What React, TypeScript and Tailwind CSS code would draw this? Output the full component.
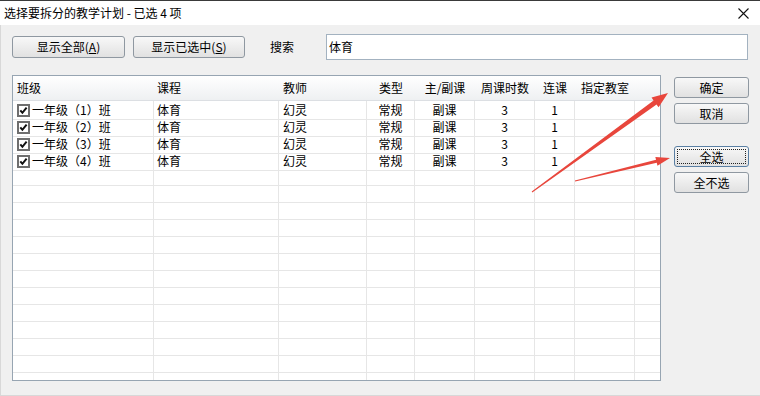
const cols = "grid grid-cols-[141px_125px_88px_48px_60px_60px_40px_60px_25px]";

const rows = [1, 2, 3, 4].map((n) => ({
  cls: `一年级（${n}）班`,
  course: "体育",
  teacher: "幻灵",
  type: "常规",
  kind: "副课",
  hours: "3",
  lian: "1",
}));

const Btn = ({
  children,
  className = "",
  focused = false,
}: {
  children: React.ReactNode;
  className?: string;
  focused?: boolean;
}) => (
  <button
    className={
      "relative flex items-center justify-center rounded-[3px] border bg-linear-to-b from-[#f8f8f8] to-[#e1e1e1] text-[12px] leading-none text-black " +
      (focused ? "border-[#5a7fa3] " : "border-[#8f98a1] ") +
      className
    }
  >
    {focused && (
      <span className="absolute inset-[2px] border border-dotted border-[#222]" />
    )}
    {children}
  </button>
);

const CheckBox = () => (
  <svg width="13" height="13" viewBox="0 0 13 13" className="shrink-0">
    <rect x="1" y="1" width="11" height="11" fill="#fff" stroke="#6e6e6e" strokeWidth="2" />
    <polyline
      points="3.3,6.3 5.4,8.8 9.6,3.6"
      fill="none"
      stroke="#111"
      strokeWidth="2"
    />
  </svg>
);

type Pt = [number, number];

// tapered arrow polygon from tail to tip
function arrowPoints(t: Pt, p: Pt, tw: number, sw: number, hl: number, hw: number) {
  const dx = p[0] - t[0];
  const dy = p[1] - t[1];
  const len = Math.hypot(dx, dy);
  const ux = dx / len;
  const uy = dy / len;
  const nx = -uy;
  const ny = ux;
  const b: Pt = [p[0] - ux * hl, p[1] - uy * hl];
  const pts: Pt[] = [
    [t[0] + (nx * tw) / 2, t[1] + (ny * tw) / 2],
    [b[0] + (nx * sw) / 2, b[1] + (ny * sw) / 2],
    [b[0] + (nx * hw) / 2, b[1] + (ny * hw) / 2],
    p,
    [b[0] - (nx * hw) / 2, b[1] - (ny * hw) / 2],
    [b[0] - (nx * sw) / 2, b[1] - (ny * sw) / 2],
    [t[0] - (nx * tw) / 2, t[1] - (ny * tw) / 2],
  ];
  return pts.map((q) => q.join(",")).join(" ");
}

export default function App() {
  const empty = Array.from({ length: 13 });

  return (
    <div className="relative w-[760px] h-[396px] overflow-hidden flex flex-col bg-white font-['Noto_Sans_CJK_SC','Noto_Sans',sans-serif] text-black">
      {/* title bar */}
      <div className="h-[25px] shrink-0 flex items-center justify-between border-t border-[#3a3a3a] bg-white pl-[4px] pr-[11px]">
        <span className="text-[12px] leading-none">选择要拆分的教学计划 - 已选 4 项</span>
        <svg width="11" height="11" viewBox="0 0 11 11">
          <path d="M0.5 0.5 L10.5 10.5 M10.5 0.5 L0.5 10.5" stroke="#111" strokeWidth="1.1" />
        </svg>
      </div>

      {/* body */}
      <div className="flex-1 bg-[#f0f0f0] border-l border-b border-[#d8d8d8]">
        <div className="flex items-center h-[26px] mt-[9px] pl-[11px]">
          <Btn className="w-[113px] h-[22px]">
            显示全部(<span className="underline">A</span>)
          </Btn>
          <Btn className="w-[112px] h-[22px] ml-[8px]">
            显示已选中(<span className="underline">S</span>)
          </Btn>
          <span className="ml-[25px] w-[24px] text-[12px]">搜索</span>
          <div className="ml-[32px] w-[422px] h-[26px] border border-[#a3b2c0] bg-white flex items-center pl-[2px] text-[12px]">
            体育
          </div>
        </div>

        <div className="flex mt-[15px] pl-[11px]">
          {/* table */}
          <div className="w-[649px] h-[306px] border border-[#97a5b2] bg-white overflow-hidden text-[12px]">
            <div className={cols + " h-[25px] items-center bg-linear-to-b from-white to-[#eef0f2] border-b border-[#dcdfe3]"}>
              <span className="pl-[4px]">班级</span>
              <span className="pl-[3px]">课程</span>
              <span className="pl-[4px]">教师</span>
              <span className="text-center">类型</span>
              <span className="text-center">主/副课</span>
              <span className="text-center">周课时数</span>
              <span className="text-center">连课</span>
              <span className="text-center">指定教室</span>
              <span />
            </div>
            {rows.map((r, i) => (
              <div key={i} className={cols + " h-[17px]"}>
                <div className="flex items-center gap-[2px] pl-[4px] border-r border-b border-[#e6e6e6]">
                  <CheckBox />
                  <span>{r.cls}</span>
                </div>
                <div className="flex items-center pl-[3px] border-r border-b border-[#e6e6e6]">{r.course}</div>
                <div className="flex items-center pl-[4px] border-r border-b border-[#e6e6e6]">{r.teacher}</div>
                <div className="flex items-center justify-center border-r border-b border-[#e6e6e6]">{r.type}</div>
                <div className="flex items-center justify-center border-r border-b border-[#e6e6e6]">{r.kind}</div>
                <div className="flex items-center justify-center border-r border-b border-[#e6e6e6]">{r.hours}</div>
                <div className="flex items-center justify-center border-r border-b border-[#e6e6e6]">{r.lian}</div>
                <div className="border-r border-b border-[#e6e6e6]" />
                <div className="border-b border-[#e6e6e6]" />
              </div>
            ))}
            {empty.map((_, i) => (
              <div key={i} className={cols + " h-[17px]"}>
                <div className="border-r border-b border-[#e6e6e6]" />
                <div className="border-r border-b border-[#e6e6e6]" />
                <div className="border-r border-b border-[#e6e6e6]" />
                <div className="border-r border-b border-[#e6e6e6]" />
                <div className="border-r border-b border-[#e6e6e6]" />
                <div className="border-r border-b border-[#e6e6e6]" />
                <div className="border-r border-b border-[#e6e6e6]" />
                <div className="border-r border-b border-[#e6e6e6]" />
                <div className="border-b border-[#e6e6e6]" />
              </div>
            ))}
          </div>

          {/* side buttons */}
          <div className="ml-[13px] pt-[2px] flex flex-col">
            <Btn className="w-[75px] h-[21px]">确定</Btn>
            <Btn className="w-[75px] h-[21px] mt-[5px]">取消</Btn>
            <Btn className="w-[75px] h-[21px] mt-[22px]" focused>
              全选
            </Btn>
            <Btn className="w-[75px] h-[21px] mt-[5px]">全不选</Btn>
          </div>
        </div>
      </div>

      {/* annotation arrows */}
      <svg className="absolute inset-0 pointer-events-none" width="760" height="396">
        <polygon points={arrowPoints([532, 192], [668, 93], 1, 5, 16, 12)} fill="#e8463c" />
        <polygon points={arrowPoints([575, 181], [670, 158], 1, 3, 14, 9)} fill="#e8463c" />
      </svg>
    </div>
  );
}
